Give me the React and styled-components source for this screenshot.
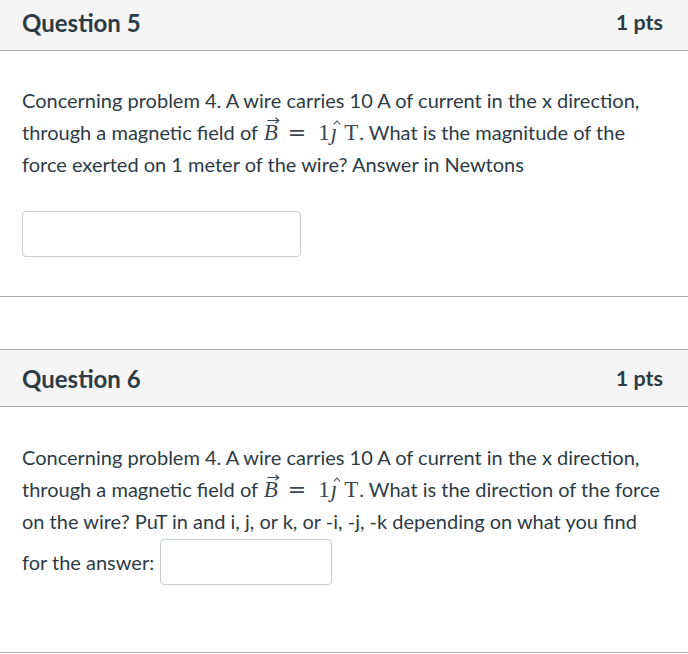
import React from 'react';
import styled, { createGlobalStyle } from 'styled-components';

const GlobalStyle = createGlobalStyle`
  html, body {
    margin: 0;
    padding: 0;
    background: #ffffff;
  }
  body {
    font-family: Lato, "Open Sans", sans-serif;
    color: #2d3b45;
    overflow: hidden;
  }
`;

const Page = styled.div`
  width: 688px;
  margin-top: -7px;
`;

const Question = styled.section`
  border-top: 1px solid #adadad;
  border-bottom: 1px solid #adadad;
  margin-bottom: 52px;

  &:last-child {
    margin-bottom: 0;
  }
`;

const Header = styled.header`
  display: flex;
  align-items: center;
  justify-content: space-between;
  height: 56px;
  padding: 0 25px 0 22px;
  background: #f5f5f5;
  border-bottom: 1px solid #adadad;
`;

const Title = styled.h2`
  margin: 0;
  font-size: 24px;
  font-weight: 700;
`;

const Points = styled.span`
  font-size: 21.5px;
  font-weight: 700;
`;

const Body = styled.div`
  padding: ${(p) => p.$top}px 22px ${(p) => p.$bottom}px;
`;

const Text = styled.p`
  margin: 0;
  font-size: 20px;
  line-height: 31px;
`;

const Math = styled.span`
  font-family: "Liberation Serif", "DejaVu Serif", serif;
  font-size: 23px;
  line-height: 33px;
  color: #3a4750;
  margin: 0 ${(p) => p.$r || 0}px 0 ${(p) => p.$l || 0}px;
`;

const Equals = styled(Math)`
  font-family: "DejaVu Serif", serif;
  font-size: 22px;
`;

const Accent = styled.span`
  position: relative;
  display: inline-block;
  font-style: italic;
  line-height: 1;
`;

const Over = styled.span`
  position: absolute;
  left: ${(p) => p.$left}px;
  top: ${(p) => p.$top}px;
  display: block;
  line-height: 0;
`;

const Answer = styled.input`
  display: block;
  box-sizing: border-box;
  width: ${(p) => p.$w}px;
  height: 46px;
  margin: 0;
  border: 1px solid #c7cdd1;
  border-radius: 4px;
  background: #fff;
  outline: none;
  font: inherit;
`;

const AnswerBox = styled.div`
  margin-top: 31px;
`;

const InlineRow = styled.div`
  display: flex;
  align-items: center;
  gap: 6px;
  margin-top: 2px;
  font-size: 20px;
`;

const Arrow = () => (
  <svg width="13" height="7" viewBox="0 0 13 7">
    <path d="M0.5 3.5h11" stroke="#3a4750" strokeWidth="1.1" fill="none" />
    <path d="M8.5 0.8l3.3 2.7-3.3 2.7" stroke="#3a4750" strokeWidth="1.1" fill="none" />
  </svg>
);

const Hat = () => (
  <svg width="8" height="5" viewBox="0 0 8 5">
    <path d="M0.8 4.5L4 1l3.2 3.5" stroke="#3a4750" strokeWidth="1.1" fill="none" />
  </svg>
);

const Field = () => (
  <>
    <Math $l={1} $r={10}>
      <Accent>
        B
        <Over $left={3} $top={-4}>
          <Arrow />
        </Over>
      </Accent>
    </Math>
    <Equals $r={12}>=</Equals>
    <Math $r={1}>1</Math>
    <Math $r={7}>
      <Accent>
        ȷ
        <Over $left={2} $top={-3}>
          <Hat />
        </Over>
      </Accent>
    </Math>
    <Math $r={1}>T</Math>.
  </>
);

export default function App() {
  return (
    <Page>
      <GlobalStyle />
      <Question>
        <Header>
          <Title>Question 5</Title>
          <Points>1 pts</Points>
        </Header>
        <Body $top={34} $bottom={39}>
          <Text>
            Concerning problem 4. A wire carries 10 A of current in the x direction,
            through a magnetic field of <Field /> What is the magnitude of the
            force exerted on 1 meter of the wire? Answer in Newtons
          </Text>
          <AnswerBox>
            <Answer $w={279} aria-label="Answer" />
          </AnswerBox>
        </Body>
      </Question>
      <Question>
        <Header>
          <Title>Question 6</Title>
          <Points>1 pts</Points>
        </Header>
        <Body $top={35} $bottom={67}>
          <Text>
            Concerning problem 4. A wire carries 10 A of current in the x direction,
            through a magnetic field of <Field /> What is the direction of the force
            on the wire? PuT in and i, j, or k, or -i, -j, -k depending on what you find
          </Text>
          <InlineRow>
            for the answer:
            <Answer $w={172} aria-label="Answer" />
          </InlineRow>
        </Body>
      </Question>
    </Page>
  );
}
